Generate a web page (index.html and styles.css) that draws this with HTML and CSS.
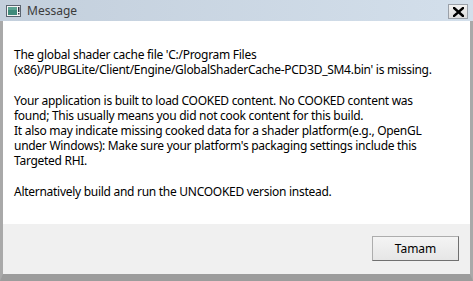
FILE: index.html
```html
<!DOCTYPE html>
<html>
<head>
<meta charset="utf-8">
<link rel="stylesheet" href="styles.css">
</head>
<body>
<div class="window">
  <div class="titlebar">
    <svg class="app-icon" width="15" height="12" viewBox="0 0 15 12">
      <rect x="0.5" y="0.5" width="14" height="11" fill="#f4f4f4" stroke="#5a6470"/>
      <rect x="2" y="2" width="9" height="8" fill="#3f8a7a"/>
      <rect x="2" y="2" width="9" height="3" fill="#5aa392"/>
      <rect x="12" y="2" width="1.5" height="5" fill="#2c3440"/>
      <rect x="12" y="8" width="1.5" height="1.5" fill="#2c3440"/>
    </svg>
    <span class="title">Message</span>
    <div class="close">
      <svg width="11" height="10" viewBox="0 0 11 10">
        <path d="M1 1 L10 9 M10 1 L1 9" stroke="#000" stroke-width="2.4" stroke-linecap="square"/>
      </svg>
    </div>
  </div>
  <div class="content">
    <p>The global shader cache file 'C:/Program Files<br>(x86)/PUBGLite/Client/Engine/GlobalShaderCache-PCD3D_SM4.bin' is missing.</p>
    <p>Your application is built to load COOKED content. No COOKED content was<br>found; This usually means you did not cook content for this build.<br>It also may indicate missing cooked data for a shader platform(e.g., OpenGL<br>under Windows): Make sure your platform's packaging settings include this<br>Targeted RHI.</p>
    <p>Alternatively build and run the UNCOOKED version instead.</p>
  </div>
  <div class="footer">
    <button class="btn">Tamam</button>
  </div>
</div>
</body>
</html>
```
FILE: styles.css
```css
html, body {
  margin: 0;
  padding: 0;
  width: 473px;
  height: 281px;
  overflow: hidden;
}
body {
  font-family: "Noto Sans", "Open Sans", sans-serif;
}
.window {
  width: 473px;
  height: 281px;
  box-sizing: border-box;
  display: flex;
  flex-direction: column;
  background: #ababab;
  border-left: 3px solid #a9a9a9;
  border-right: 3px solid #a9a9a9;
  border-bottom: 7px solid #9c9c9c;
}
.titlebar {
  height: 21px;
  display: flex;
  align-items: center;
  background: linear-gradient(to right, #c3cfdc, #d3dfeb);
  margin-left: -3px;
  margin-right: -3px;
  padding-left: 6px;
  padding-right: 5px;
}
.app-icon {
  display: block;
  margin-top: 1px;
}
.title {
  margin-left: 6px;
  font-size: 12px;
  color: #3b3b3b;
  flex: 1;
}
.close {
  width: 20px;
  height: 15px;
  box-sizing: border-box;
  border: 1px solid #9aa0a8;
  background: linear-gradient(#f2f2f2, #dcdcdc);
  display: flex;
  align-items: center;
  justify-content: center;
  margin-top: 2px;
}
.close svg { display: block; }
.content {
  background: #fff;
  height: 203px;
  padding: 26px 0 0 11px;
  box-sizing: border-box;
  font-size: 12px;
  letter-spacing: -0.28px;
  line-height: 15px;
  color: #000;
}
.content p {
  margin: 0 0 16px 0;
}
.footer {
  flex: 1;
  background: #f0f0f0;
  display: flex;
  justify-content: flex-end;
  align-items: flex-start;
  padding: 12px 11px 0 0;
}
.btn {
  width: 87px;
  height: 25px;
  font-family: "Noto Sans", "Open Sans", sans-serif;
  font-size: 12px;
  color: #000;
  background: linear-gradient(#f4f4f4, #e6e6e6);
  border: 1px solid #adadad;
  border-right-color: #707070;
  border-bottom-color: #707070;
  padding: 0;
}
```
